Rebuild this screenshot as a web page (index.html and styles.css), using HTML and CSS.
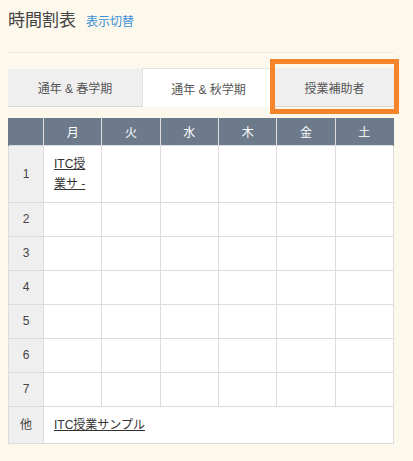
FILE: index.html
```html
<!DOCTYPE html>
<html lang="ja">
<head>
    <meta charset="UTF-8">
    <meta name="viewport" content="width=device-width, initial-scale=1.0">
    <title>時間割表</title>
    <link rel="stylesheet" href="styles.css">
</head>
<body>
    <div class="page">
        <div class="title-bar">
            <h1>時間割表</h1>
            <a href="#" class="switch-link">表示切替</a>
        </div>

        <div class="tabs">
            <div class="tab tab-spring">通年 &amp; 春学期</div>
            <div class="tab tab-autumn active">通年 &amp; 秋学期</div>
            <div class="tab tab-assist">授業補助者<span class="highlight"></span></div>
        </div>

        <table class="timetable">
            <thead>
                <tr>
                    <th class="period-col"></th>
                    <th>月</th>
                    <th>火</th>
                    <th>水</th>
                    <th>木</th>
                    <th>金</th>
                    <th>土</th>
                </tr>
            </thead>
            <tbody>
                <tr class="first-row">
                    <td class="period">1</td>
                    <td><a href="#" class="course">ITC授業サ -</a></td>
                    <td></td><td></td><td></td><td></td><td></td>
                </tr>
                <tr><td class="period">2</td><td></td><td></td><td></td><td></td><td></td><td></td></tr>
                <tr><td class="period">3</td><td></td><td></td><td></td><td></td><td></td><td></td></tr>
                <tr><td class="period">4</td><td></td><td></td><td></td><td></td><td></td><td></td></tr>
                <tr><td class="period">5</td><td></td><td></td><td></td><td></td><td></td><td></td></tr>
                <tr><td class="period">6</td><td></td><td></td><td></td><td></td><td></td><td></td></tr>
                <tr><td class="period">7</td><td></td><td></td><td></td><td></td><td></td><td></td></tr>
                <tr class="other-row">
                    <td class="period">他</td>
                    <td colspan="6"><a href="#" class="course">ITC授業サンプル</a></td>
                </tr>
            </tbody>
        </table>
    </div>
</body>
</html>
```

FILE: styles.css
```css
body {
    margin: 0;
    background-color: #fdf8ec;
    font-family: "Liberation Sans", "Noto Sans CJK JP", sans-serif;
    color: #333;
}

.page {
    width: 386px;
    padding: 8px 8px;
}

.title-bar {
    display: flex;
    align-items: baseline;
    gap: 10px;
    height: 45px;
    box-sizing: border-box;
    border-bottom: 1px solid #f1e9d9;
}

.title-bar h1 {
    margin: 0;
    font-size: 17px;
    font-weight: normal;
    line-height: 26px;
    color: #444;
}

.switch-link {
    font-size: 12px;
    color: #3b8fd4;
    text-decoration: none;
}

.tabs {
    display: flex;
    margin-top: 15px;
    height: 39px;
}

.tab {
    position: relative;
    display: flex;
    align-items: center;
    justify-content: center;
    box-sizing: border-box;
    font-size: 12px;
    color: #555;
    background: #efefef;
    border-bottom: 1px solid #d9d9d9;
}

.tab-spring {
    flex: 0 0 134px;
    margin-top: 1px;
}

.tab-autumn {
    flex: 0 0 133px;
}

.tab-assist {
    flex: 1;
}

.tab.active {
    background: #fff;
    border: 1px solid #e3e3e3;
    border-bottom: none;
}

.highlight {
    position: absolute;
    top: -9px;
    bottom: -8px;
    left: -5px;
    right: -5px;
    border: 5px solid #f6842a;
}

.timetable {
    margin-top: 11px;
    width: 386px;
    border-collapse: collapse;
    table-layout: fixed;
    background: #fff;
    font-size: 12px;
}

.timetable th {
    background: #6c7a8b;
    color: #fff;
    font-weight: normal;
    height: 27px;
    padding: 0;
    border: 1px solid #dcdcdc;
    border-top: none;
    border-bottom: none;
}

.timetable th:first-child {
    border-left: 1px solid #6c7a8b;
}

.timetable th:last-child {
    border-right: 1px solid #6c7a8b;
}

.period-col {
    width: 34px;
}

.timetable td {
    border: 1px solid #dcdcdc;
    height: 20px;
    padding: 6px 10px 7px;
    line-height: 20px;
    vertical-align: middle;
}

.timetable td.period {
    background: #efefef;
    text-align: center;
    padding: 6px 0 7px;
    color: #444;
}

.first-row td,
.timetable .first-row td.period {
    padding-top: 8px;
    padding-bottom: 8px;
}

.timetable .other-row td {
    padding-top: 8px;
    padding-bottom: 8px;
}

.course {
    color: #333;
    text-decoration: underline;
}
```
